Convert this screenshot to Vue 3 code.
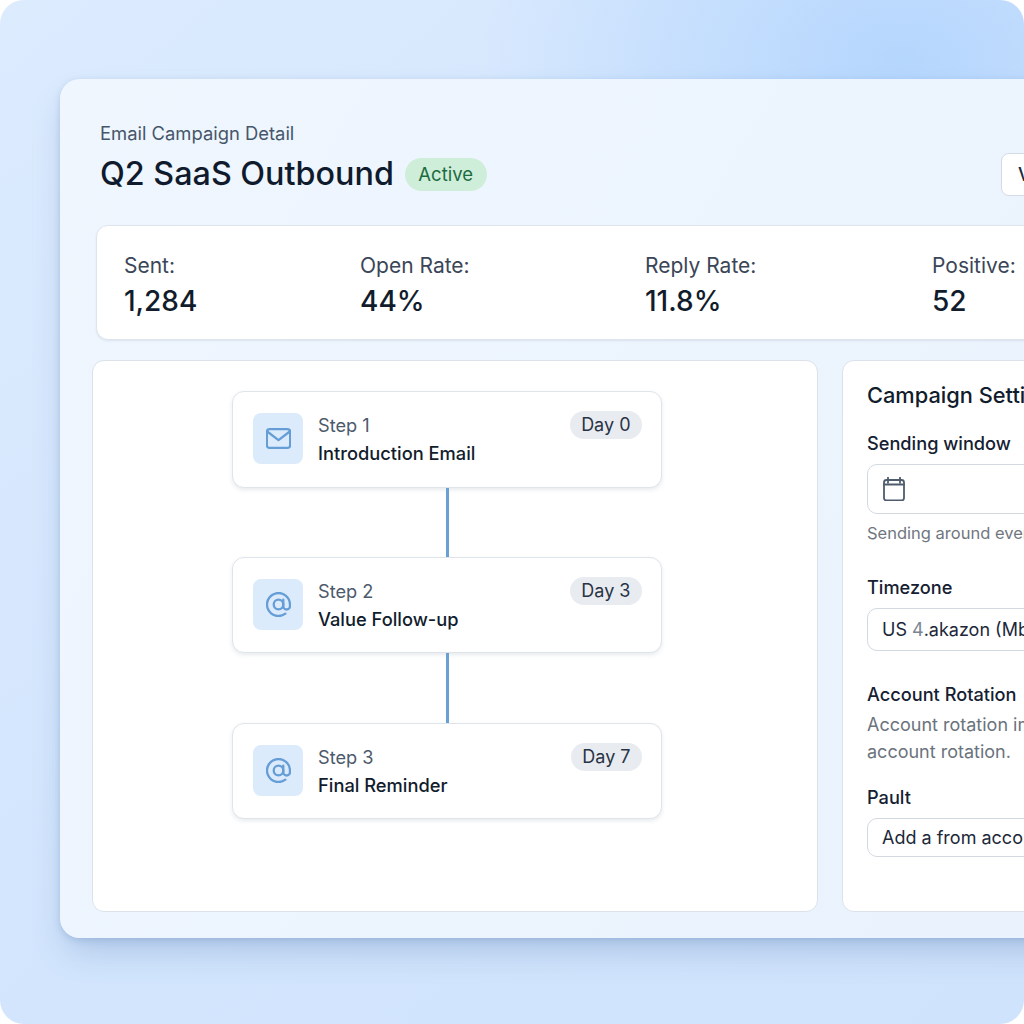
<script setup>
const stats = [
  { label: "Sent:", value: "1,284" },
  { label: "Open Rate:", value: "44%" },
  { label: "Reply Rate:", value: "11.8%" },
  { label: "Positive:", value: "52" },
];

const steps = [
  { id: 1, title: "Introduction Email", day: "Day 0", icon: "mail" },
  { id: 2, title: "Value Follow-up", day: "Day 3", icon: "at" },
  { id: 3, title: "Final Reminder", day: "Day 7", icon: "at" },
];
</script>

<template>
  <div class="stage">
    <main class="window">
      <header class="head">
        <div>
          <p class="eyebrow">Email Campaign Detail</p>
          <div class="title-row">
            <h1 class="title">Q2 SaaS Outbound</h1>
            <span class="status">Active</span>
          </div>
        </div>
        <button class="head-btn" type="button">View</button>
      </header>

      <section class="stats">
        <div v-for="stat in stats" :key="stat.label" class="stat">
          <span class="stat__label">{{ stat.label }}</span>
          <strong class="stat__value">{{ stat.value }}</strong>
        </div>
      </section>

      <div class="columns">
        <section class="flow">
          <template v-for="(step, index) in steps" :key="step.id">
            <span v-if="index > 0" class="flow__line"></span>
            <article class="step">
              <span class="step__icon">
                <svg v-if="step.icon === 'mail'" viewBox="0 0 24 24" aria-hidden="true">
                  <rect x="0.8" y="3" width="22.4" height="18" rx="2.6" />
                  <path d="M1.5 5.5 12 13.5l10.5-8" />
                </svg>
                <svg v-else viewBox="0 0 24 24" aria-hidden="true">
                  <circle cx="12" cy="12" r="4.6" />
                  <path d="M16.6 7.4v6.2a3.2 3.2 0 0 0 6.4 0V12a11 11 0 1 0-4.4 8.8" />
                </svg>
              </span>
              <div class="step__text">
                <span class="step__num">Step {{ step.id }}</span>
                <span class="step__title">{{ step.title }}</span>
              </div>
              <span class="step__day">{{ step.day }}</span>
            </article>
          </template>
        </section>

        <aside class="settings">
          <h2 class="settings__title">Campaign Settings</h2>

          <h3 class="field-label">Sending window</h3>
          <div class="input input--tall">
            <svg class="cal" viewBox="0 0 24 24" aria-hidden="true">
              <rect x="2" y="3" width="20" height="20.5" rx="2.5" />
              <path d="M2 7.5h20M6 0.5v5M18 0.5v5" />
            </svg>
          </div>
          <p class="hint">Sending around every weekday morning</p>

          <h3 class="field-label field-label--zone">Timezone</h3>
          <div class="input input--mid">US&nbsp;<span class="input__odd">4</span>.akazon (Mbabane)</div>

          <h3 class="field-label field-label--rotation">Account Rotation</h3>
          <p class="copy">Account rotation improves deliverability with<br />account rotation.</p>

          <h3 class="field-label field-label--pault">Pault</h3>
          <div class="input input--low">Add a from account</div>
        </aside>
      </div>
    </main>
  </div>
</template>

<style>
html,
body {
  margin: 0;
  background: #fff;
}
</style>

<style scoped>
.stage {
  width: 1024px;
  height: 1024px;
  box-sizing: border-box;
  padding: 79px 0 0 60px;
  overflow: hidden;
  border-radius: 24px;
  background:
    radial-gradient(420px 300px at 88% 6%, #b5d6fd 0%, rgba(181, 214, 253, 0) 100%),
    linear-gradient(140deg, #dcebfe 0%, #d2e5fd 55%, #cfe3fc 100%);
  font-family: Inter, "Liberation Sans", sans-serif;
  color: #0f1b2d;
}

.window {
  width: 1140px;
  height: 859px;
  box-sizing: border-box;
  padding: 44px 0 26px 32px;
  border-radius: 20px 0 0 20px;
  background: linear-gradient(120deg, #eff6fe 0%, #e9f2fd 100%);
  box-shadow:
    0 18px 32px -6px rgba(88, 124, 178, 0.32),
    0 2px 6px rgba(88, 124, 178, 0.25);
}

.head {
  display: flex;
  justify-content: space-between;
  align-items: flex-start;
  width: 1000px;
  height: 102px;
  padding-left: 8px;
  box-sizing: border-box;
}

.eyebrow {
  margin: 0 0 9px;
  font-size: 18.4px;
  line-height: 20px;
  color: #46566a;
}

.title-row {
  display: flex;
  align-items: center;
  gap: 11px;
}

.title {
  margin: 0;
  font-size: 32.3px;
  line-height: 44px;
  font-weight: 500;
  color: #0f1b2d;
}

.status {
  padding: 0 13.5px;
  height: 33px;
  line-height: 33px;
  border-radius: 17px;
  background: #cfeed9;
  color: #1c6b40;
  font-size: 18.5px;
}

.head-btn {
  width: 91px;
  height: 43px;
  margin-top: 30px;
  padding: 0 0 0 16px;
  text-align: left;
  border: 1px solid #d3dbe6;
  border-radius: 8px;
  background: #fff;
  color: #1b2738;
  font: 500 18px Inter, "Liberation Sans", sans-serif;
}

.stats {
  display: grid;
  grid-template-columns: 236px 285px 287px 200px;
  width: 1060px;
  height: 115px;
  box-sizing: border-box;
  margin-left: 4px;
  padding: 5px 0 0 27px;
  align-content: center;
  border: 1px solid #dfe5ed;
  border-radius: 12px;
  background: #fff;
  box-shadow: 0 1px 2px rgba(60, 80, 110, 0.1);
}

.stat {
  display: flex;
  flex-direction: column;
  gap: 5px;
}

.stat__label {
  font-size: 21px;
  line-height: 26px;
  color: #3a4657;
}

.stat__value {
  font-size: 28px;
  line-height: 34px;
  font-weight: 500;
  color: #111c2c;
}

.columns {
  display: flex;
  gap: 24px;
  margin-top: 20px;
  height: 552px;
}

.flow,
.settings {
  box-sizing: border-box;
  height: 100%;
  border: 1px solid #dbe2ea;
  border-radius: 12px;
  background: #fff;
}

.flow {
  flex: 0 0 726px;
  display: flex;
  flex-direction: column;
  align-items: center;
  padding: 30px 16px 0 0;
}

.flow__line {
  width: 3px;
  height: 69px;
  background: #6ba0d2;
}

.flow__line:last-of-type {
  height: 70px;
}

.step {
  display: flex;
  width: 430px;
  height: 97px;
  box-sizing: border-box;
  padding: 21px 19px 0 20px;
  border: 1px solid #dfe4ea;
  border-radius: 12px;
  background: #fff;
  box-shadow: 0 2px 4px rgba(60, 80, 110, 0.12);
}

.step + .flow__line + .step {
  height: 96px;
}

.step__icon {
  display: grid;
  place-items: center;
  flex: none;
  width: 50px;
  height: 51px;
  margin-right: 15px;
  border-radius: 8px;
  background: #dcebfc;
}

.step__icon svg {
  width: 25px;
  height: 25px;
  fill: none;
  stroke: #659dd6;
  stroke-width: 2.2;
  stroke-linecap: round;
  stroke-linejoin: round;
}

.step__text {
  display: flex;
  flex: 1;
  flex-direction: column;
  gap: 4px;
}

.step__num {
  font-size: 18.2px;
  line-height: 24px;
  color: #4d5a6b;
}

.step__title {
  font-size: 18.3px;
  line-height: 24px;
  font-weight: 500;
  color: #111c2c;
}

.step__day {
  align-self: flex-start;
  margin-top: -2px;
  height: 28px;
  padding: 0 11.5px;
  line-height: 28px;
  border-radius: 14px;
  background: #e8ebf0;
  color: #283444;
  font-size: 18px;
}

.settings {
  flex: 0 0 330px;
  padding: 19px 0 0 24px;
  overflow: hidden;
  white-space: nowrap;
}

.settings__title {
  margin: 0;
  font-size: 21.8px;
  line-height: 30px;
  font-weight: 500;
  color: #111c2c;
}

.field-label {
  margin: 21px 0 9px;
  font-size: 18.2px;
  line-height: 24px;
  font-weight: 500;
  color: #152032;
}

.field-label--zone {
  margin: 30px 0 9px;
}

.field-label--rotation {
  margin: 31px 0 0;
}

.field-label--pault {
  margin: 20px 0 9px;
}

.input {
  display: flex;
  align-items: center;
  box-sizing: border-box;
  width: 300px;
  padding-left: 14px;
  border: 1px solid #d3d9e1;
  border-radius: 10px;
  background: #fff;
  color: #1c2839;
  font-size: 18px;
}

.input__odd {
  color: #7a8592;
}

.input--tall {
  height: 50px;
}

.input--mid {
  height: 43px;
}

.input--low {
  height: 39px;
}

.cal {
  width: 24px;
  height: 24px;
  fill: none;
  stroke: #4f5c6c;
  stroke-width: 1.8;
  stroke-linecap: round;
  stroke-linejoin: round;
}

.hint {
  margin: 7px 0 0;
  font-size: 16.5px;
  line-height: 24px;
  color: #71777f;
}

.copy {
  margin: 5px 0 0;
  font-size: 18px;
  line-height: 27px;
  color: #6b737d;
}
</style>
